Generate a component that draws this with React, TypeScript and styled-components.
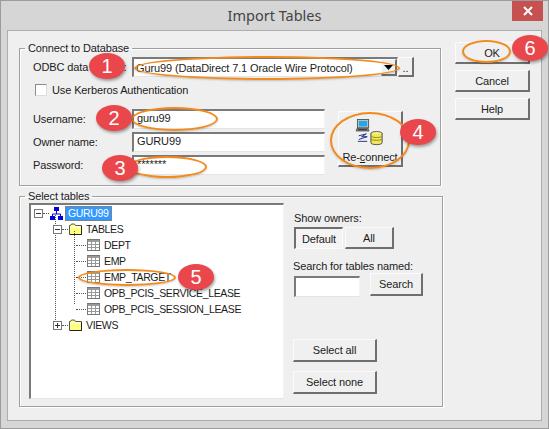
import React from 'react';
import styled, { createGlobalStyle, css } from 'styled-components';

const GlobalStyle = createGlobalStyle`
  html, body { margin: 0; padding: 0; background: #fff; }
  * { box-sizing: border-box; }
`;

const FONT = `"Liberation Sans", Arial, sans-serif`;

const NetworkIcon = () => (
  <svg width="13" height="13" viewBox="0 0 13 13">
    <path d="M4 0h5v4H4zM0 9h5v4H0zM8 9h5v4H8z" fill="#0000e0" />
    <path d="M6.5 4v3M2.5 9V7h8v2" stroke="#0000e0" fill="none" />
  </svg>
);

const FolderIcon = () => (
  <svg width="13" height="12" viewBox="0 0 13 12">
    <path d="M0.5 2.5h1l1-1.5h3l1 1.5h6v9h-12z" fill="#ffff80" stroke="#555" />
    <path d="M1.5 3.5h10v1h-10z" fill="#fff" />
    <path d="M12.5 3v8.5H1" stroke="#222" fill="none" />
  </svg>
);

const TableIcon = () => (
  <svg width="13" height="12" viewBox="0 0 13 12">
    <rect x="0.5" y="0.5" width="12" height="11" fill="#fff" stroke="#777" />
    <path d="M0.5 1h12v2h-12z" fill="#9a9a9a" />
    <path d="M4.5 1v10M8.5 1v10M1 5.5h11M1 8.5h11" stroke="#999" fill="none" />
  </svg>
);

const ReconnectIcon = () => (
  <svg width="30" height="29" viewBox="0 0 30 29">
    <rect x="1.5" y="0.5" width="12" height="9" fill="#c8c8c8" stroke="#555" />
    <rect x="3" y="2" width="9" height="6" fill="#22a8e8" />
    <path d="M1 10h12l1 3H0z" fill="#8a8a8a" stroke="#333" strokeWidth="0.6" />
    <path d="M2 11.5h10" stroke="#222" />
    <path d="M3 18l8-2-5 3 6 0-9 3M2 24h10" stroke="#1a2a90" fill="none" />
    <ellipse cx="22" cy="15.5" rx="6" ry="2" fill="#ffff90" stroke="#444" />
    <path d="M16 15.5v10c0 1.2 2.6 2 6 2s6-.8 6-2v-10" fill="#f2e65a" stroke="#444" />
    <path d="M16.5 19c2 1.2 9 1.2 11 0M16.5 22c2 1.2 9 1.2 11 0" stroke="#8a8420" fill="none" />
  </svg>
);

const CaretIcon = () => (
  <svg width="9" height="5" viewBox="0 0 9 5">
    <path d="M0 0h9L4.5 5z" fill="#000" />
  </svg>
);

export default function App() {
  return (
    <>
      <GlobalStyle />
      <Window>
        <TitleBar>
          <span />
          <Title>Import Tables</Title>
          <CloseButton>
            <svg width="10" height="10" viewBox="0 0 10 10">
              <path d="M1 1l8 8M9 1l-8 8" stroke="#fff" strokeWidth="2" />
            </svg>
          </CloseButton>
        </TitleBar>

        <Client>
          <LeftColumn>
            <ConnectGroup>
              <legend>Connect to Database</legend>
              <ConnectBody>
                <SourceRow>
                  <FieldLabel>ODBC data source:</FieldLabel>
                  <Combo>
                    <ComboText>Guru99 (DataDirect 7.1 Oracle Wire Protocol)</ComboText>
                    <ComboArrow>
                      <CaretIcon />
                    </ComboArrow>
                  </Combo>
                  <BrowseButton>..</BrowseButton>
                </SourceRow>
                <CheckRow>
                  <CheckBox />
                  <span>Use Kerberos Authentication</span>
                </CheckRow>
                <CredentialsRow>
                  <Fields>
                    <FieldRow>
                      <FieldLabel>Username:</FieldLabel>
                      <TextField>guru99</TextField>
                    </FieldRow>
                    <FieldRow>
                      <FieldLabel>Owner name:</FieldLabel>
                      <TextField>GURU99</TextField>
                    </FieldRow>
                    <FieldRow>
                      <FieldLabel>Password:</FieldLabel>
                      <TextField>*******</TextField>
                    </FieldRow>
                  </Fields>
                  <ReconnectButton>
                    <ReconnectIcon />
                    <span>
                      Re-<u>c</u>onnect
                    </span>
                  </ReconnectButton>
                </CredentialsRow>
              </ConnectBody>
            </ConnectGroup>

            <TablesGroup>
              <legend>Select tables</legend>
              <TablesBody>
                <Tree>
                  <TreeRow $level={0}>
                    <Expander $open />
                    <Connector />
                    <NetworkIcon />
                    <SelectedLabel>GURU99</SelectedLabel>
                  </TreeRow>
                  <Branch $left={25} $height={105}>
                    <TreeRow $level={1}>
                      <Expander $open />
                      <Connector />
                      <FolderIcon />
                      <NodeLabel>TABLES</NodeLabel>
                    </TreeRow>
                    <Branch $left={44} $height={73}>
                      {['DEPT', 'EMP', 'EMP_TARGET', 'OPB_PCIS_SERVICE_LEASE', 'OPB_PCIS_SESSION_LEASE'].map((name) => (
                        <TreeRow $level={2} key={name}>
                          <LeafConnector />
                          <TableIcon />
                          <NodeLabel>{name}</NodeLabel>
                        </TreeRow>
                      ))}
                    </Branch>
                    <TreeRow $level={1}>
                      <Expander />
                      <Connector />
                      <FolderIcon />
                      <NodeLabel>VIEWS</NodeLabel>
                    </TreeRow>
                  </Branch>
                </Tree>

                <SidePane>
                  <SideLabel>Show owners:</SideLabel>
                  <OwnerButtons>
                    <OwnerButton $pressed>Default</OwnerButton>
                    <OwnerButton>All</OwnerButton>
                  </OwnerButtons>
                  <SearchLabel>Search for tables named:</SearchLabel>
                  <SearchRow>
                    <SearchField />
                    <SearchButton>Search</SearchButton>
                  </SearchRow>
                  <SelectButton $first>Select all</SelectButton>
                  <SelectButton>Select none</SelectButton>
                </SidePane>
              </TablesBody>
            </TablesGroup>
          </LeftColumn>

          <ActionColumn>
            <ActionButton>OK</ActionButton>
            <ActionButton>Cancel</ActionButton>
            <ActionButton>Help</ActionButton>
          </ActionColumn>
        </Client>

        <Ring $x={134} $y={56} $w={266} $h={24} />
        <Ring $x={131} $y={107} $w={87} $h={24} />
        <Ring $x={127} $y={156} $w={80} $h={22} />
        <Ring $x={330} $y={112} $w={80} $h={57} />
        <Ring $x={78} $y={269} $w={98} $h={17} />
        <Ring $x={462} $y={40} $w={49} $h={23} />

        <Badge $x={89} $y={53}>1</Badge>
        <Badge $x={96} $y={105}>2</Badge>
        <Badge $x={102} $y={155}>3</Badge>
        <Badge $x={400} $y={119}>4</Badge>
        <Badge $x={178} $y={264}>5</Badge>
        <Badge $x={512} $y={35}>6</Badge>
      </Window>
    </>
  );
}

const raised = css`
  background: #f0f0f0;
  border-style: solid;
  border-width: 1px 2px 2px 1px;
  border-color: #fbfbfb #6f6f6f #6f6f6f #fbfbfb;
`;

const sunken = css`
  background: #fff;
  border-style: solid;
  border-width: 2px 1px 1px 2px;
  border-color: #7a7a7a #f4f4f4 #e4e4e4 #7a7a7a;
`;

const Window = styled.div`
  position: relative;
  width: 549px;
  height: 429px;
  display: flex;
  flex-direction: column;
  background: #d6d6d6;
  border: 1px solid #9c9c9c;
  overflow: hidden;
  font-family: ${FONT};
  font-size: 11px;
  letter-spacing: -0.12px;
  color: #1c1c1c;
`;

const TitleBar = styled.div`
  height: 29px;
  flex: none;
  display: grid;
  grid-template-columns: 1fr auto 1fr;
  align-items: start;
`;

const Title = styled.div`
  font-family: "Noto Sans", sans-serif;
  font-size: 14.5px;
  letter-spacing: 0;
  line-height: 29px;
  color: #444;
`;

const CloseButton = styled.div`
  justify-self: end;
  width: 31px;
  height: 20px;
  margin-right: 5px;
  background: #c75050;
  display: flex;
  align-items: center;
  justify-content: center;
`;

const Client = styled.div`
  flex: 1;
  display: flex;
  gap: 12px;
  margin: 0 6px 7px 6px;
  padding: 10px 0 0 11px;
  background: #efefef;
  border: 1px solid #adadad;
`;

const LeftColumn = styled.div`
  width: 424px;
  display: flex;
  flex-direction: column;
`;

const Group = styled.fieldset`
  margin: 0;
  padding: 0;
  min-width: 0;
  border: 1px solid #a0a0a0;
  box-shadow: 1px 1px 0 #fff, inset 1px 1px 0 #fff;

  legend {
    margin-left: 5px;
    padding: 0 3px;
    line-height: 14px;
  }
`;

const ConnectGroup = styled(Group)`
  width: 422px;
  height: 145px;
`;

const ConnectBody = styled.div`
  padding: 2px 0 0 13px;
`;

const TablesGroup = styled(Group)`
  width: 424px;
  height: 218px;
  margin-top: 3px;
`;

const FieldLabel = styled.div`
  width: 99px;
  flex: none;
  white-space: nowrap;
`;

const SourceRow = styled.div`
  display: flex;
  align-items: center;
  height: 20px;
`;

const Combo = styled.div`
  ${sunken}
  width: 266px;
  height: 20px;
  display: flex;
  align-items: center;
  justify-content: space-between;
`;

const ComboText = styled.span`
  padding-left: 2px;
  white-space: nowrap;
`;

const ComboArrow = styled.div`
  ${raised}
  width: 16px;
  height: 17px;
  display: flex;
  align-items: center;
  justify-content: center;
`;

const BrowseButton = styled.div`
  ${raised}
  width: 16px;
  height: 20px;
  text-align: center;
  line-height: 20px;
`;

const CheckRow = styled.div`
  display: flex;
  align-items: center;
  gap: 5px;
  height: 14px;
  margin: 6px 0 0 2px;
`;

const CheckBox = styled.div`
  width: 12px;
  height: 12px;
  background: #fff;
  border: 1px solid #8a8a8a;
  border-right-color: #ddd;
  border-bottom-color: #ddd;
`;

const CredentialsRow = styled.div`
  display: flex;
  align-items: flex-start;
  margin-top: 12px;
`;

const Fields = styled.div`
  display: flex;
  flex-direction: column;
  gap: 3px;
`;

const FieldRow = styled.div`
  display: flex;
  align-items: center;
`;

const TextField = styled.div`
  ${sunken}
  width: 193px;
  height: 20px;
  padding-left: 3px;
  line-height: 14px;
`;

const ReconnectButton = styled.div`
  ${raised}
  width: 65px;
  height: 56px;
  margin: 2px 0 0 13px;
  display: flex;
  flex-direction: column;
  align-items: center;
  white-space: nowrap;
  line-height: 15px;
  gap: 4px;
  padding-top: 7px;
`;

const TablesBody = styled.div`
  display: flex;
  gap: 10px;
  padding-left: 9px;
`;

const Tree = styled.div`
  ${sunken}
  position: relative;
  width: 255px;
  height: 196px;
  padding: 0 0 0 2px;
`;

const TreeRow = styled.div<{ $level: number }>`
  position: relative;
  display: flex;
  align-items: center;
  height: 16px;
  padding-left: ${(p) => 1 + p.$level * 19}px;
  white-space: nowrap;
`;

const Branch = styled.div<{ $left: number; $height: number }>`
  position: relative;

  &::before {
    content: '';
    position: absolute;
    left: ${(p) => p.$left - 3}px;
    top: -6px;
    height: ${(p) => p.$height}px;
    border-left: 1px dotted #555;
  }
`;

const Expander = styled.span<{ $open?: boolean }>`
  position: relative;
  z-index: 1;
  width: 9px;
  height: 9px;
  flex: none;
  background: linear-gradient(#333, #333) center / 5px 1px no-repeat, #fff;
  border: 1px solid #777;

  ${(p) =>
    !p.$open &&
    css`
      background:
        linear-gradient(#333, #333) center / 5px 1px no-repeat,
        linear-gradient(#333, #333) center / 1px 5px no-repeat,
        #fff;
    `}
`;

const Connector = styled.span`
  width: 6px;
  margin-right: 1px;
  border-top: 1px dotted #555;
`;

const LeafConnector = styled.span`
  width: 10px;
  margin-left: 4px;
  margin-right: 1px;
  border-top: 1px dotted #555;
`;

const NodeLabel = styled.span`
  margin-left: 4px;
  font-size: 10.5px;
  letter-spacing: -0.35px;
  line-height: 16px;
`;

const SelectedLabel = styled.span`
  margin-left: 2px;
  padding: 0 2px;
  height: 15px;
  font-size: 10.5px;
  letter-spacing: -0.35px;
  line-height: 13px;
  background: #3399ff;
  color: #fff;
  border: 1px dotted #b5701c;
`;

const SidePane = styled.div`
  display: flex;
  flex-direction: column;
  align-items: flex-start;
  padding-top: 8px;
`;

const SideLabel = styled.div`
  line-height: 14px;
`;

const OwnerButtons = styled.div`
  display: flex;
  gap: 2px;
  margin-top: 2px;
`;

const OwnerButton = styled.div<{ $pressed?: boolean }>`
  ${(p) =>
    p.$pressed
      ? css`
          border-style: solid;
          border-width: 2px 1px 1px 2px;
          border-color: #6f6f6f #fbfbfb #fbfbfb #6f6f6f;
          background: #f4f4f4;
          padding-top: 1px;
        `
      : raised}
  width: 49px;
  height: 22px;
  display: flex;
  align-items: center;
  justify-content: center;
`;

const SearchLabel = styled.div`
  margin-top: 11px;
  margin-left: -1px;
  line-height: 13px;
  white-space: nowrap;
`;

const SearchRow = styled.div`
  display: flex;
  align-items: flex-start;
  gap: 10px;
`;

const SearchField = styled.div`
  ${sunken}
  width: 66px;
  height: 21px;
  margin-top: 3px;
`;

const PlainButton = styled.div`
  ${raised}
  display: flex;
  align-items: center;
  justify-content: center;
  white-space: nowrap;
`;

const SearchButton = styled(PlainButton)`
  width: 53px;
  height: 23px;
`;

const SelectButton = styled(PlainButton)<{ $first?: boolean }>`
  width: 84px;
  height: 23px;
  margin-left: -1px;
  margin-top: ${(p) => (p.$first ? 42 : 9)}px;
`;

const ActionColumn = styled.div`
  display: flex;
  flex-direction: column;
  gap: 6px;
  padding-top: 1px;
`;

const ActionButton = styled(PlainButton)`
  width: 75px;
  height: 22px;
`;

const Ring = styled.div<{ $x: number; $y: number; $w: number; $h: number }>`
  position: absolute;
  left: ${(p) => p.$x - 1}px;
  top: ${(p) => p.$y - 1}px;
  width: ${(p) => p.$w}px;
  height: ${(p) => p.$h}px;
  border: 2px solid #f28a1c;
  border-radius: 50%;
  box-shadow: 0 1px 2px rgba(0, 0, 0, 0.2);
`;

const Badge = styled.div<{ $x: number; $y: number }>`
  position: absolute;
  left: ${(p) => p.$x - 1}px;
  top: ${(p) => p.$y - 1}px;
  width: 36px;
  height: 26px;
  border-radius: 50%;
  background: #e9474c;
  box-shadow: 1px 2px 3px rgba(0, 0, 0, 0.35);
  color: #fff;
  font-family: "Liberation Sans", sans-serif;
  font-size: 20px;
  letter-spacing: 0;
  line-height: 26px;
  text-align: center;
`;
